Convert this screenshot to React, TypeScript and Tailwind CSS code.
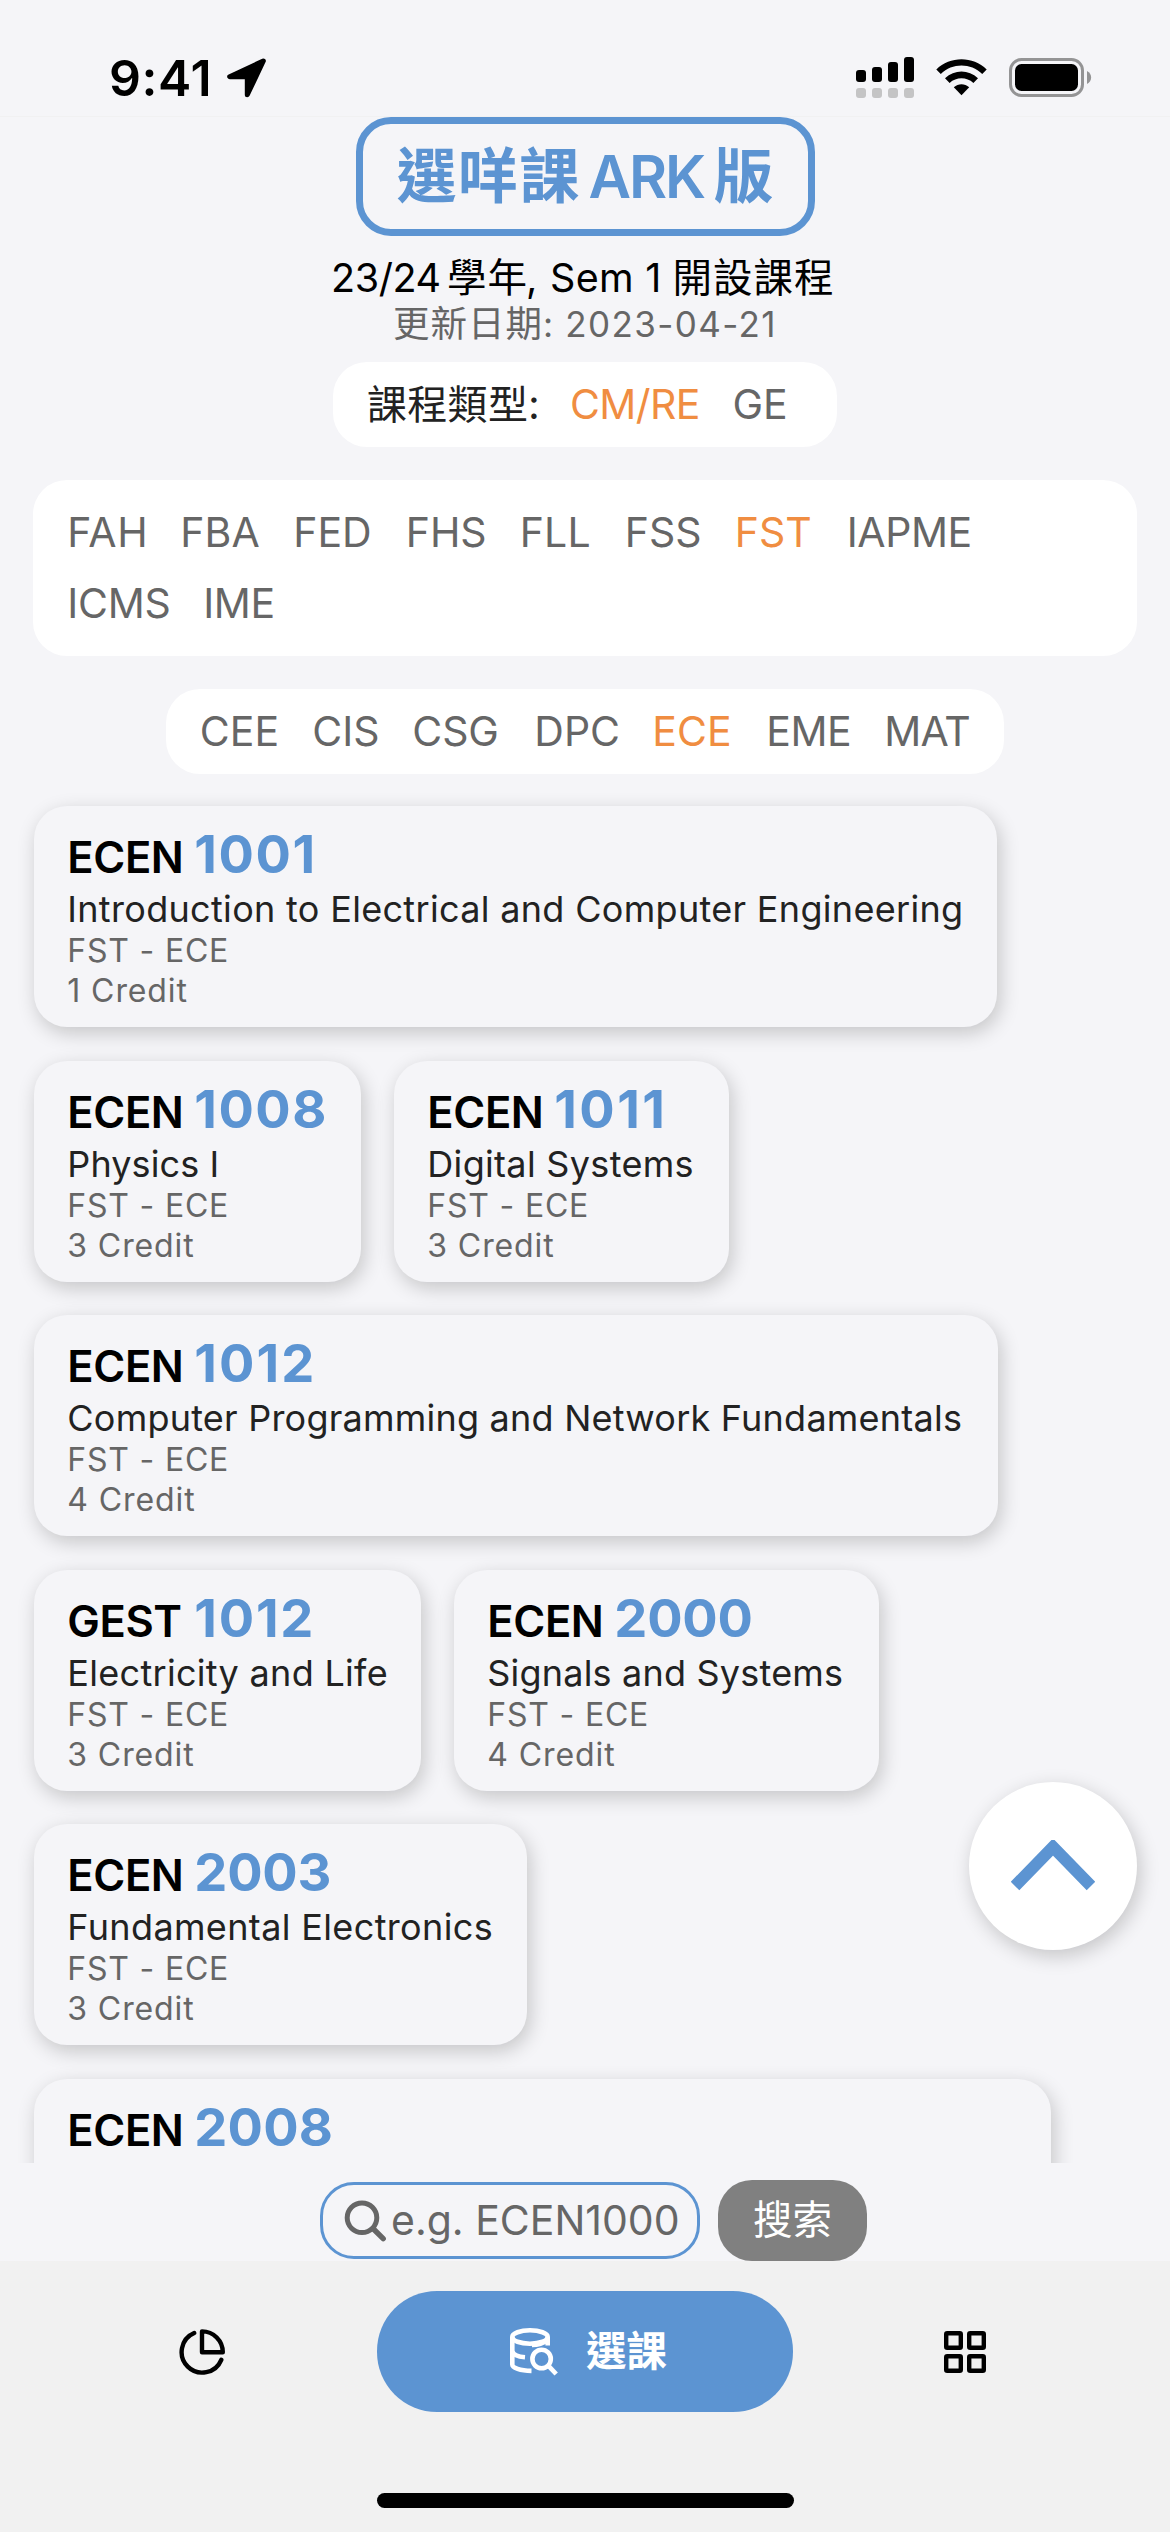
type Option = { label: string; box: string; active?: boolean };
type Course = {
  prefix: string;
  code: string;
  title?: string;
  credit?: number;
  box: string;
  codeTracking: string;
  titleTracking?: string;
};

const faculties: Option[][] = [
  [
    { label: "FAH", box: "w-[113px] tracking-[0.6px]" },
    { label: "FBA", box: "w-[113px] tracking-[0.2px]" },
    { label: "FED", box: "w-[112.5px]" },
    { label: "FHS", box: "w-[114px]" },
    { label: "FLL", box: "w-[105px] tracking-[0.2px]" },
    { label: "FSS", box: "w-[110px]" },
    { label: "FST", box: "w-[112px]", active: true },
    { label: "IAPME", box: "w-[124px] tracking-[-0.4px]" },
  ],
  [
    { label: "ICMS", box: "w-[136px] tracking-[-0.2px]" },
    { label: "IME", box: "w-[80px] tracking-[-0.4px]" },
  ],
];

const departments: Option[] = [
  { label: "CEE", box: "w-[112.5px]" },
  { label: "CIS", box: "w-[100px]" },
  { label: "CSG", box: "w-[122px] tracking-[-0.1px]" },
  { label: "DPC", box: "w-[118px]" },
  { label: "ECE", box: "w-[114px]", active: true },
  { label: "EME", box: "w-[118px] tracking-[-0.5px]" },
  { label: "MAT", box: "w-[88px] tracking-[-0.9px]" },
];

const courseRows: Course[][] = [
  [
    {
      prefix: "ECEN",
      code: "1001",
      title: "Introduction to Electrical and Computer Engineering",
      credit: 1,
      box: "w-[963px]",
      codeTracking: "tracking-[1.6px]",
      titleTracking: "tracking-[0.32px]",
    },
  ],
  [
    {
      prefix: "ECEN",
      code: "1008",
      title: "Physics I",
      credit: 3,
      box: "w-[327px]",
      codeTracking: "tracking-[1.5px]",
      titleTracking: "tracking-[0.1px]",
    },
    {
      prefix: "ECEN",
      code: "1011",
      title: "Digital Systems",
      credit: 3,
      box: "w-[335px]",
      codeTracking: "tracking-[2.4px]",
      titleTracking: "tracking-[0.32px]",
    },
  ],
  [
    {
      prefix: "ECEN",
      code: "1012",
      title: "Computer Programming and Network Fundamentals",
      credit: 4,
      box: "w-[963.5px]",
      codeTracking: "tracking-[2.1px]",
      titleTracking: "tracking-[0.23px]",
    },
  ],
  [
    {
      prefix: "GEST",
      code: "1012",
      title: "Electricity and Life",
      credit: 3,
      box: "w-[387px]",
      codeTracking: "tracking-[1.8px]",
      titleTracking: "tracking-[0.3px]",
    },
    {
      prefix: "ECEN",
      code: "2000",
      title: "Signals and Systems",
      credit: 4,
      box: "w-[425px]",
      codeTracking: "tracking-[-0.2px]",
      titleTracking: "tracking-[0.2px]",
    },
  ],
  [
    {
      prefix: "ECEN",
      code: "2003",
      title: "Fundamental Electronics",
      credit: 3,
      box: "w-[493px]",
      codeTracking: "tracking-[-0.2px]",
      titleTracking: "tracking-[0.36px]",
    },
  ],
  [{ prefix: "ECEN", code: "2008", box: "w-[1017px]", codeTracking: "tracking-[0.2px]" }],
];

function StatusBar() {
  return (
    <header className="flex h-[117px] shrink-0 items-start border-b border-[#f1f1f2] pt-[58px] pl-[109px]">
      <span className="w-[118px] text-[50px] leading-[40px] font-[560] tracking-[0.6px] text-black">9:41</span>
      <svg className="h-[40px] w-[40px]" viewBox="0 0 40 40">
        <path d="M36.3 3 L2.7 18.7 H20.3 V36.8 Z" fill="#000" stroke="#000" strokeWidth="5" strokeLinejoin="round" />
      </svg>
      <svg className="ml-[589px] h-[42px] w-[58px] overflow-visible" viewBox="0 0 58 42">
        <rect x="0" y="12" width="10" height="12" rx="3" />
        <rect x="16" y="9" width="10" height="15" rx="3" />
        <rect x="32" y="4" width="10" height="20" rx="3" />
        <rect x="48" y="-1" width="10" height="25" rx="3" />
        <g fill="#c4c4c5">
          <rect x="0" y="30" width="10" height="10" rx="3" />
          <rect x="16" y="30" width="10" height="10" rx="3" />
          <rect x="32" y="30" width="10" height="10" rx="3" />
          <rect x="48" y="30" width="10" height="10" rx="3" />
        </g>
      </svg>
      <svg className="ml-[22px] h-[40px] w-[51px]" viewBox="0 0 51 40">
        <path d="M0.3 11.5 C14 -2.2 37 -2.2 50.7 11.5 L46.2 16 C34.6 4.8 16.4 4.8 4.8 16 Z" />
        <path d="M9 20.3 C18.5 11.3 32.5 11.3 42 20.3 L37.4 25 C30.5 18.8 20.5 18.8 13.6 25 Z" />
        <path d="M17.8 29.2 C22.5 25.2 28.5 25.2 33.2 29.2 L25.5 37.3 Z" />
      </svg>
      <svg className="ml-[22px] h-[40px] w-[83px]" viewBox="0 0 83 40">
        <rect x="1.5" y="1.5" width="72" height="36" rx="11" fill="none" stroke="#949495" strokeWidth="3" />
        <rect x="6" y="6" width="63" height="27" rx="6.5" />
        <path d="M78 13 C83.5 15.5 83.5 23.5 78 26 Z" fill="#949495" />
      </svg>
    </header>
  );
}

function OptionItem({ label, box, active }: Option) {
  return (
    <span className={`${box} shrink-0 whitespace-nowrap ${active ? "text-[#f08d41]" : "text-[#666666]"}`}>{label}</span>
  );
}

function CourseCard({ prefix, code, title, credit, box, codeTracking, titleTracking }: Course) {
  return (
    <article
      className={`${box} h-[221px] shrink-0 rounded-[33px] bg-[#f5f5f8] pt-[20px] pl-[33px] whitespace-nowrap shadow-[3px_6px_20px_rgba(0,0,0,0.2)]`}
    >
      <div className="flex h-[56px] items-baseline leading-[56px]">
        <span className="w-[127px] text-[43.5px] font-semibold tracking-[-0.4px] text-black">{prefix}</span>
        <span className={`${codeTracking} text-[52.5px] font-bold text-[#5c94d2]`}>{code}</span>
      </div>
      {title && (
        <>
          <h2 className={`${titleTracking} mt-[5px] h-[44px] text-[36px] leading-[44px] text-[#222222]`}>{title}</h2>
          <p className="text-[32px] leading-[40px] tracking-[0.8px] text-[#666666]">FST - ECE</p>
          <p className="text-[32px] leading-[40px] tracking-[0.9px] text-[#666666]">{credit} Credit</p>
        </>
      )}
    </article>
  );
}

function DatabaseSearchIcon() {
  return (
    <svg className="h-[48px] w-[48px]" viewBox="0 0 48 48" fill="none" stroke="#fff" strokeWidth="4.6">
      <ellipse cx="20" cy="9" rx="17.7" ry="6.7" />
      <path d="M2.3 9 V36.5 C2.3 39.8 10 42.7 21.5 42.9" />
      <path d="M2.3 23.5 C3.3 26.8 8.5 28.8 15 29.3" />
      <path d="M37.7 9 V17.5" />
      <path d="M22 17 C28 17 33 15.6 37 12.5" />
      <circle cx="31.6" cy="31" r="9.2" />
      <path d="M38 37.3 L46.2 46" />
    </svg>
  );
}

export default function App() {
  return (
    <div className="flex h-[2532px] w-[1170px] flex-col overflow-hidden bg-[#f5f5f8] font-['Inter','Noto_Sans_CJK_TC',sans-serif]">
      <StatusBar />

      <main className="relative flex h-[2046px] shrink-0 flex-col items-center overflow-hidden">
        <h1 className="flex h-[119px] w-[459px] shrink-0 rounded-[35px] border-[7px] border-[#5c94d2] pl-[34px] text-[60px] leading-[105px] font-bold whitespace-nowrap text-[#5c94d2]">
          <span className="w-[192px] tracking-[1.5px]">選咩課</span>
          <span className="w-[125px] text-[58.5px] font-[580] tracking-[-2.1px]">ARK</span>
          <span>版</span>
        </h1>

        <div className="mt-[19px] flex h-[46px] w-[508px] shrink-0 text-[39.5px] leading-[46px] whitespace-nowrap text-black">
          <span className="w-[116px] tracking-[-0.4px]">23/24</span>
          <span className="w-[79px] tracking-[1px]">學年</span>
          <span className="w-[24px]">,</span>
          <span className="w-[122.5px] tracking-[0.3px]">Sem 1</span>
          <span className="tracking-[1px]">開設課程</span>
        </div>
        <div className="flex h-[46px] w-[384px] shrink-0 text-[35px] leading-[46px] whitespace-nowrap text-[#666666]">
          <span className="w-[150px] text-[36.5px] tracking-[1px]">更新日期</span>
          <span className="w-[23px]">:</span>
          <span className="tracking-[1.4px]">2023-04-21</span>
        </div>

        <div className="mt-[15px] flex h-[85px] w-[504px] shrink-0 rounded-[34px] bg-white pl-[34px] text-[41px] leading-[85px] whitespace-nowrap text-[#222222]">
          <span className="w-[161px] text-[40px] tracking-[0.3px]">課程類型</span>
          <span className="w-[42px]">:</span>
          <OptionItem label="CM/RE" box="w-[162.5px] tracking-[-0.6px]" active />
          <OptionItem label="GE" box="w-[56px]" />
        </div>

        <div className="mt-[33px] flex h-[176px] w-[1104px] shrink-0 flex-col rounded-[34px] bg-white pt-[17px] pl-[34.2px] text-[41px] leading-[71px]">
          {faculties.map((row, i) => (
            <div key={i} className="flex h-[71px]">
              {row.map((o) => (
                <OptionItem key={o.label} {...o} />
              ))}
            </div>
          ))}
        </div>

        <div className="mt-[33px] flex h-[85px] w-[838px] shrink-0 rounded-[34px] bg-white pl-[33.8px] text-[41px] leading-[85px]">
          {departments.map((o) => (
            <OptionItem key={o.label} {...o} />
          ))}
        </div>

        <section className="mt-[32px] flex w-full flex-col gap-[33.6px] pl-[34.3px]">
          {courseRows.map((row, i) => (
            <div key={i} className="flex gap-[33px]">
              {row.map((c) => (
                <CourseCard key={c.prefix + c.code} {...c} />
              ))}
            </div>
          ))}
        </section>

        <button className="absolute top-[1665px] right-[33px] flex h-[168px] w-[168px] items-center justify-center rounded-full bg-white shadow-[3px_6px_20px_rgba(0,0,0,0.2)]">
          <svg className="h-[52px] w-[84px]" viewBox="0 0 84 52">
            <path d="M4 46 L42 7 L80 46" fill="none" stroke="#5c94d2" strokeWidth="12" />
          </svg>
        </button>
      </main>

      <div className="flex h-[98px] shrink-0 items-center pt-[17px] pl-[320px]">
        <div className="flex h-[77px] w-[380px] items-center rounded-[34px] border-[3px] border-[#5c94d2] pl-[21px]">
          <svg className="h-[42px] w-[47px] shrink-0" viewBox="0 0 47 42" fill="none" stroke="#666666" strokeLinecap="round">
            <circle cx="18" cy="17.7" r="14.8" strokeWidth="5" />
            <path d="M29 28.5 L39.2 38.7" strokeWidth="5.4" />
          </svg>
          <span className="text-[41px] leading-[71px] whitespace-nowrap text-[#666666]">e.g. ECEN1000</span>
        </div>
        <button className="ml-[18px] h-[81px] w-[149px] rounded-[34px] bg-[#808080] text-center text-[39.5px] leading-[81px] text-white">
          搜索
        </button>
      </div>

      <nav className="h-[271px] shrink-0 bg-[#f1f1f1] pt-[30px]">
        <div className="flex h-[121px] items-center pl-[179px]">
          <svg className="h-[46px] w-[46px]" viewBox="0 0 46 46" fill="none" stroke="#000" strokeWidth="4.4" strokeLinecap="round" strokeLinejoin="round">
            <path d="M15.2 4 A20.6 20.6 0 1 0 42.3 30.8" />
            <path d="M23 2.4 V23.2 H43.8 A20.8 20.8 0 0 0 23 2.4 Z" />
          </svg>
          <button className="ml-[152px] flex h-[121px] w-[416px] items-center rounded-[60px] bg-[#5c94d2] pl-[133px]">
            <DatabaseSearchIcon />
            <span className="ml-[28px] text-[40.5px] leading-[121px] font-bold text-white">選課</span>
          </button>
          <svg className="ml-[151px] h-[42px] w-[42px]" viewBox="0 0 42 42" fill="none" stroke="#000" strokeWidth="4.4">
            <rect x="2.2" y="2.2" width="14.6" height="14.6" rx="1" />
            <rect x="25.2" y="2.2" width="14.6" height="14.6" rx="1" />
            <rect x="2.2" y="25.2" width="14.6" height="14.6" rx="1" />
            <rect x="25.2" y="25.2" width="14.6" height="14.6" rx="1" />
          </svg>
        </div>
        <div className="mx-auto mt-[81px] h-[15px] w-[417px] rounded-full bg-black" />
      </nav>
    </div>
  );
}
